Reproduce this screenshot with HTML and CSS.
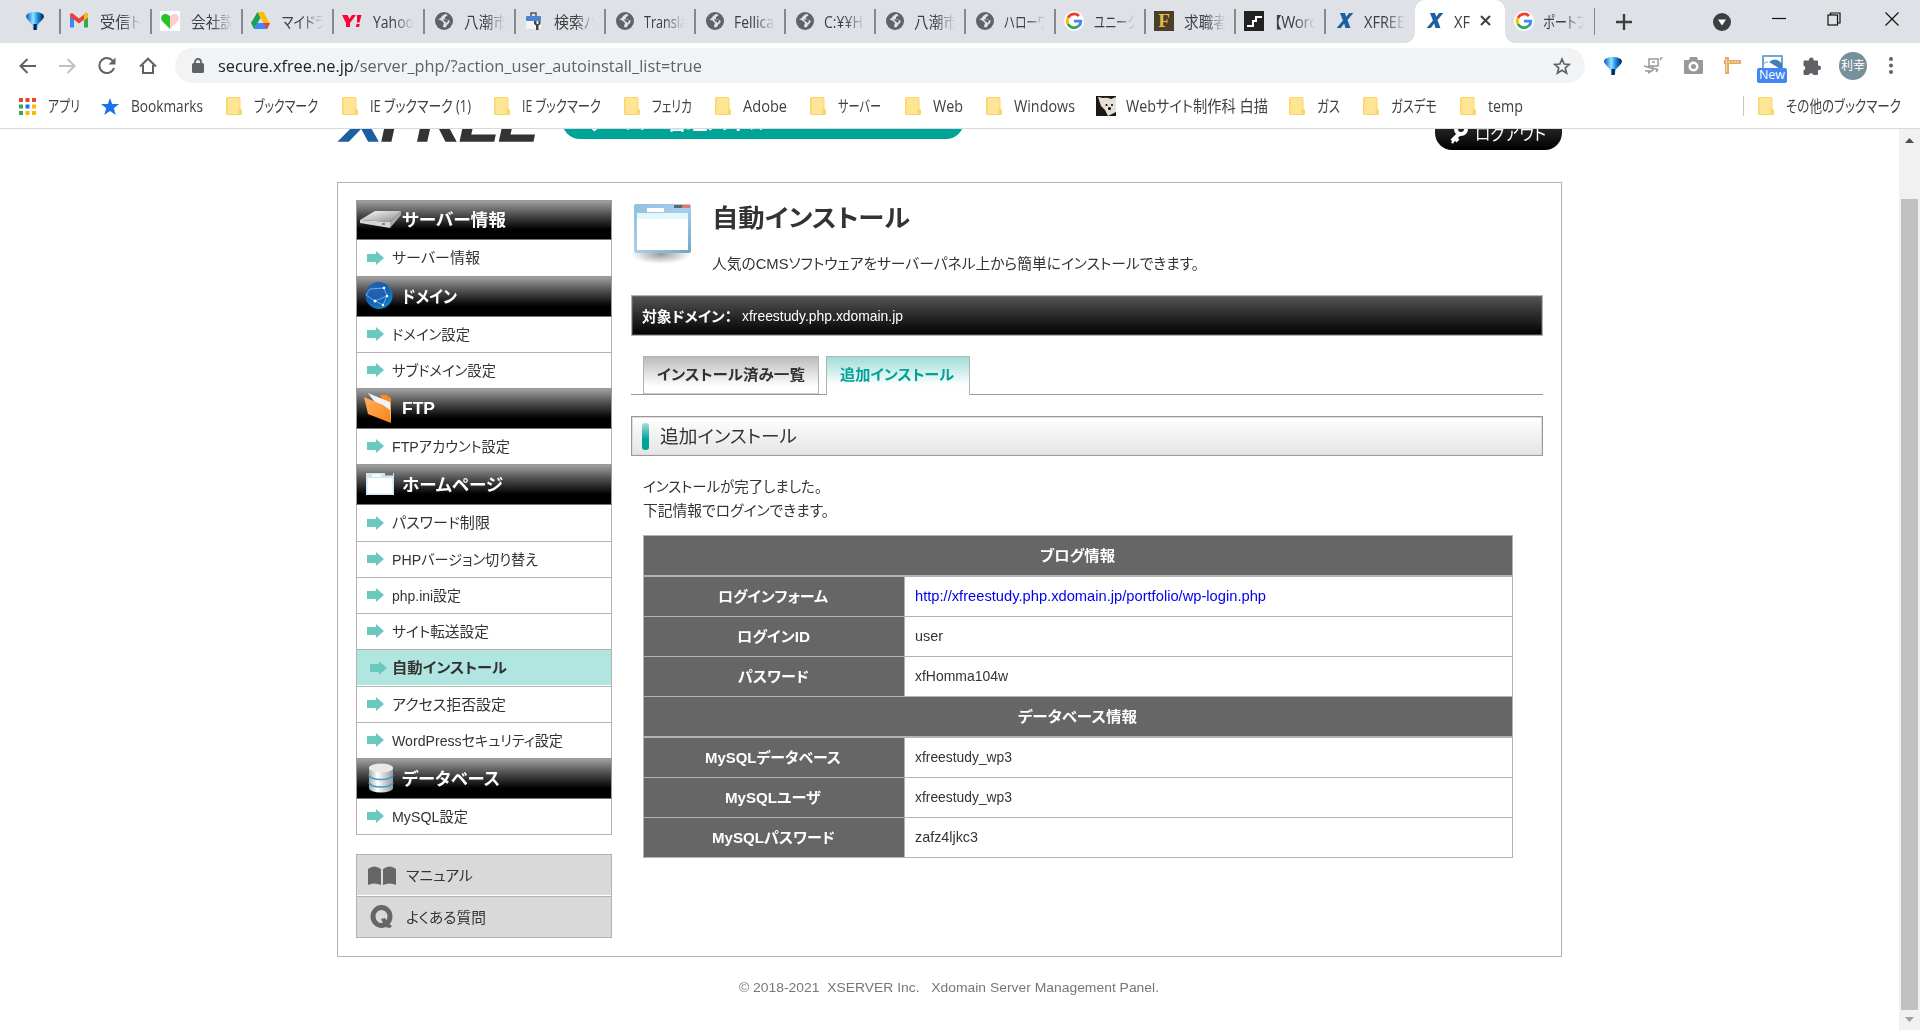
FILE: index.html
```html
<!DOCTYPE html>
<html lang="ja">
<head>
<meta charset="utf-8">
<title>XFREE サーバーパネル</title>
<link rel="stylesheet" href="styles.css">
</head>
<body>
<svg class="defs" width="0" height="0">
  <defs>
    <linearGradient id="gBlue" x1="0" y1="0" x2="1" y2="0"><stop offset="0" stop-color="#0a4fc4"/><stop offset=".4" stop-color="#8fe6ff"/><stop offset=".65" stop-color="#1a8be8"/><stop offset="1" stop-color="#061a4a"/></linearGradient>
    <linearGradient id="gDisk" x1="0" y1="0" x2="1" y2="1"><stop offset="0" stop-color="#fff"/><stop offset="1" stop-color="#8a8a8a"/></linearGradient>
    <radialGradient id="gGlobe" cx=".4" cy=".35" r=".7"><stop offset="0" stop-color="#2a5fb0"/><stop offset=".6" stop-color="#1560b0"/><stop offset="1" stop-color="#0e8ad0"/></radialGradient>
    <linearGradient id="gFold" x1="0" y1="0" x2="1" y2="1"><stop offset="0" stop-color="#ffb061"/><stop offset="1" stop-color="#f98416"/></linearGradient>
    <linearGradient id="gCyl" x1="0" y1="0" x2="1" y2="0"><stop offset="0" stop-color="#aaa"/><stop offset=".35" stop-color="#fff"/><stop offset="1" stop-color="#999"/></linearGradient>
    <linearGradient id="gWin" x1="0" y1="0" x2="1" y2="1"><stop offset="0" stop-color="#8fc0dc"/><stop offset=".5" stop-color="#a9cdf0"/><stop offset="1" stop-color="#6fa6c6"/></linearGradient>
    <radialGradient id="gShade"><stop offset="0" stop-color="#999"/><stop offset="1" stop-color="#999" stop-opacity="0"/></radialGradient>
    <symbol id="balloon" viewBox="0 0 18 18"><path d="M0 4C1 1 5 0 9 0s8 1 9 4c0 3-4 5.500-6.500 9L11 18H7l-.5-5C4 9.500 0 7 0 4z" fill="url(#gBlue)"/><path d="M7.500 12h3.300l-.3 6h-3z" fill="#06224f"/></symbol>
    <symbol id="globe" viewBox="0 0 18 18"><circle cx="9" cy="9" r="9" fill="#5f6368"/><path d="M3 7c2 0 3-1 4-3l3-2c2 0 3 1 2 2l-2 1v2l3 1c2 0 2 2 1 3l-2 2-1 2c-2 1-3 0-3-1l1-3-2-2z" fill="#dee1e6"/><path d="M8 7l5 1-1 3-3-2z" fill="#5f6368"/></symbol>
    <symbol id="google" viewBox="0 0 20 20"><circle cx="10" cy="10" r="10" fill="#fff"/><g fill="none" stroke-width="2.800"><path d="M15 5A6.800 6.800 0 0 0 4 6.800" stroke="#ea4335"/><path d="M4 6.800a6.800 6.800 0 0 0 0 6.400" stroke="#fbbc05"/><path d="M4 13.200a6.800 6.800 0 0 0 10.700 1.600" stroke="#34a853"/><path d="M10 10.200h6.800c0 2-.8 3.600-2.100 4.600" stroke="#4285f4"/></g></symbol>
    <symbol id="xlogo" viewBox="0 0 20 18"><path d="M4 0h6l1.500 4.500L15 0h5l-7 8.500L16.500 18h-6L9 12.500 5 18H0l7.500-9z" fill="#1d5fa3"/></symbol>
    <symbol id="folder" viewBox="0 0 16 18"><path d="M1.500 0H13a1.500 1.500 0 0 1 1.500 1.500V12l1.500 1v4a1 1 0 0 1-1 1H1.500A1.500 1.500 0 0 1 0 16.500v-15A1.500 1.500 0 0 1 1.500 0z" fill="#f8d66a"/><path d="M1.500 1H13.500V11.500L12.500 13v4h-11z" fill="#ffe593"/></symbol>
    <symbol id="arrow" viewBox="0 0 17 14"><path d="M0 3h9V0l8 7-8 7v-3H0z" fill="#6bc8be"/></symbol>
    <symbol id="win" viewBox="0 0 28 22"><rect width="28" height="22" fill="#cfe6f5"/><rect x="1.500" y="5" width="25" height="15.500" fill="#fff"/><rect x="19" width="8" height="2.500" fill="#7b6670"/><rect x="6" y="1.500" width="9" height="2" fill="#fff"/></symbol>
  </defs>
</svg>

<div class="browser">
  <div class="tabstrip">
    <div class="pinned"><svg width="18" height="18"><use href="#balloon"/></svg></div>
    <div class="tab wide"><svg width="20" height="17" viewBox="0 0 20 16"><path d="M1 15V2l4 2v11z" fill="#4285f4"/><path d="M15 4l4-2v13h-4z" fill="#34a853"/><path d="M1 2c1-2 3-1 4 0l5 4 5-4c1-1 3-2 4 0v2l-9 7-9-7z" fill="#ea4335"/><path d="M15 2c1-1 3-2 4 0v3l-4 3z" fill="#fbbc04"/></svg><span class="label"><span class="fit" data-w="42">受信ト</span></span></div>
    <div class="tab wide"><svg width="20" height="20"><rect width="20" height="20" fill="#fff"/><path d="M10 18L2 10C-1 5 4 0 10 5z" fill="#27c427"/><path d="M10 18l8-8c3-5-2-10-8-5z" fill="#fcc"/></svg><span class="label"><span class="fit" data-w="44">会社説</span></span></div>
    <div class="tab wide"><svg width="19" height="17"><path d="M6.500 0h6l6 11h-6z" fill="#fbbc04"/><path d="M6.500 0L0 11l3 6 6.500-11z" fill="#1e9e58"/><path d="M3 17h13l3-6H6z" fill="#4285f4"/><path d="M12.500 11H19l-3 6z" fill="#ea4335"/></svg><span class="label"><span class="fit" data-w="44">マイドラ</span></span></div>
    <div class="tab wide"><svg width="20" height="14"><path d="M0 1h5.500l2 4 2.500-4h4L8 9v4H4V9zM15 1h4.500l-2 7.500H15zM14.500 10h3.200l-.6 3h-3.200z" fill="#ff0033"/></svg><span class="label"><span class="fit" data-w="41">Yahoo</span></span></div>
    <div class="tab wide"><svg class="in" width="18" height="18"><use href="#globe"/></svg><span class="label"><span class="fit" data-w="44">八潮市</span></span></div>
    <div class="tab"><svg class="in" width="16" height="18"><path d="M5 4V1h5v3" fill="none" stroke="#555" stroke-width="1.500"/><rect y="4" width="15" height="5" rx="1" fill="#4d82d6"/><rect y="9" width="15" height="8" fill="#f4f4f4"/><path d="M8 9v3l2 1.500V18h2.500v-4.500L14.500 12V9h-2v3h-2V9z" fill="#444"/></svg><span class="label"><span class="fit" data-w="44">検索パ</span></span></div>
    <div class="tab"><svg class="in" width="18" height="18"><use href="#globe"/></svg><span class="label"><span class="fit" data-w="43">Transla</span></span></div>
    <div class="tab"><svg class="in" width="18" height="18"><use href="#globe"/></svg><span class="label"><span class="fit" data-w="40">Fellica</span></span></div>
    <div class="tab"><svg class="in" width="18" height="18"><use href="#globe"/></svg><span class="label"><span class="fit" data-w="39">C:¥¥H</span></span></div>
    <div class="tab"><svg class="in" width="18" height="18"><use href="#globe"/></svg><span class="label"><span class="fit" data-w="44">八潮市</span></span></div>
    <div class="tab"><svg class="in" width="18" height="18"><use href="#globe"/></svg><span class="label"><span class="fit" data-w="44">ハローワ</span></span></div>
    <div class="tab"><svg width="20" height="20"><use href="#google"/></svg><span class="label"><span class="fit" data-w="44">ユニーク</span></span></div>
    <div class="tab"><span class="f-icon">F</span><span class="label"><span class="fit" data-w="44">求職者</span></span></div>
    <div class="tab"><svg width="20" height="20"><rect width="20" height="20" fill="#222"/><path d="M3 15h6v-5h3V6h6" fill="none" stroke="#fff" stroke-width="2"/></svg><span class="label"><span class="fit tight" data-w="44">【Word</span></span></div>
    <div class="tab"><svg class="in" width="18" height="15"><use href="#xlogo"/></svg><span class="label"><span class="fit" data-w="41">XFREE</span></span></div>
    <div class="tab active"><svg class="in" width="18" height="15"><use href="#xlogo"/></svg><span class="label short"><span class="fit" data-w="16">XF</span></span><svg class="close" width="11" height="11"><path d="M1 1l9 9M10 1l-9 9" stroke="#3c4043" stroke-width="2"/></svg></div>
    <div class="tab last"><svg width="20" height="20"><use href="#google"/></svg><span class="label"><span class="fit" data-w="44">ポートフ</span></span></div>
    <svg class="plus" width="16" height="16"><path d="M8 0v16M0 8h16" stroke="#3c4043" stroke-width="2.400"/></svg>
    <div class="winctl">
      <svg width="18" height="18"><circle cx="9" cy="9" r="9" fill="#3c4043"/><path d="M5 6.500h8l-4 6z" fill="#fff"/></svg>
      <svg width="14" height="14"><path d="M0 6.500h14" stroke="#111" stroke-width="1.200"/></svg>
      <svg width="14" height="14" fill="none" stroke="#111" stroke-width="1.200"><rect x="1" y="3" width="9.500" height="10"/><path d="M3.500 3V1H13v10h-2.500"/></svg>
      <svg width="14" height="14"><path d="M.5.500l13 13M13.500.5l-13 13" stroke="#111" stroke-width="1.200"/></svg>
    </div>
  </div>

  <div class="toolbar">
    <div class="nav">
      <svg width="17" height="16" fill="none" stroke="#5f6368" stroke-width="2"><path d="M17 8H1.500M8.500 1l-7 7 7 7"/></svg>
      <svg width="17" height="16" fill="none" stroke="#bdc1c6" stroke-width="2"><path d="M0 8h15.500M8.500 1l7 7-7 7"/></svg>
      <svg width="18" height="18" fill="none" stroke="#5f6368" stroke-width="2"><path d="M15.500 5A7.500 7.500 0 1 0 16 11"/><path d="M10.500 7.500h7V.5z" fill="#5f6368" stroke="none"/></svg>
      <svg width="18" height="18" fill="none" stroke="#5f6368" stroke-width="2"><path d="M4 8v8h10V8M1 9.500L9 1.700l8 7.800" /></svg>
    </div>
    <div class="omnibox">
      <svg width="12" height="15"><rect y="5" width="12" height="10" rx="1.500" fill="#5f6368"/><path d="M3 6V4a3 3 0 0 1 6 0v2" fill="none" stroke="#5f6368" stroke-width="1.800"/></svg>
      <span class="url"><span class="fit" data-w="484"><b>secure.xfree.ne.jp</b>/server_php/?action_user_autoinstall_list=true</span></span>
      <svg class="fav" width="18" height="18" fill="none" stroke="#5f6368" stroke-width="1.700"><path d="M9 2l2.100 5 5.200.4-4 3.500 1.300 5.200L9 13.300l-4.600 2.800 1.300-5.200-4-3.500 5.200-.4z"/></svg>
    </div>
    <div class="ext">
      <svg width="18" height="18"><use href="#balloon"/></svg>
      <svg width="20" height="18" fill="none" stroke="#999" stroke-width="1.500"><path d="M6 2h9v7H6zM9 5h3M1 9l7 2 6 1M10 9v4l-5 3M2 14h5M17 3l2-3M15 12l-2 3"/></svg>
      <svg width="19" height="17"><path d="M1 3h4l1-3h7l1 3h4q1 0 1 1v12q0 1-1 1H1q-1 0-1-1V4q0-1 1-1z" fill="#999"/><circle cx="9.500" cy="9.500" r="5" fill="#fff"/><circle cx="9.500" cy="9.500" r="2.500" fill="#999"/></svg>
      <svg width="17" height="17"><path d="M1 0h4v3h12v4H5v10H1V7H0V3h1z" fill="#e5a869"/><path d="M2.500 2v13M5 4v2M8 4v2M11 4v2M14 4v2" stroke="#fbd9ae" stroke-width="1.200"/></svg>
      <div class="snap"><svg width="21" height="16"><rect width="21" height="16" rx="1" fill="#6fa6d2"/><path d="M2 2h17v11H2z" fill="#fff"/><path d="M7 7q7-6 13 2v6z" fill="#3f80b5"/><path d="M1 10q2-4 5-3" fill="none" stroke="#6fa6d2"/></svg><span class="badge">New</span></div>
      <svg width="18" height="18"><path d="M1.500 3.500H6a2.400 2.400 0 1 1 4.600 0H14a1 1 0 0 1 1 1v4a2.400 2.400 0 1 1 0 4.600V17a1 1 0 0 1-1 1h-3.500a2.500 2.500 0 0 0-4.800 0H1.500a1 1 0 0 1-1-1v-3.500a2.500 2.500 0 0 0 0-4.800V4.500a1 1 0 0 1 1-1z" fill="#5f6368"/></svg>
      <span class="avatar">利幸</span>
      <svg width="4" height="17" fill="#5f6368"><circle cx="2" cy="2" r="2"/><circle cx="2" cy="8.500" r="2"/><circle cx="2" cy="15" r="2"/></svg>
    </div>
  </div>

  <div class="bookmarks">
    <div class="bm"><svg width="17" height="17"><g fill="#ea4335"><path d="M0 0h4v4H0zM6.500 0h4v4h-4zM13 0h4v4h-4z"/></g><path d="M0 6.500h4v4H0zM0 13h4v4H0z" fill="#34a853"/><path d="M6.500 6.500h4v4h-4z" fill="#1a73e8"/><path d="M13 6.500h4v4h-4zM6.500 13h4v4h-4zM13 13h4v4h-4z" fill="#fbbc04"/></svg><span class="fit" data-w="32">アプリ</span></div>
    <div class="bm"><svg width="18" height="17"><path d="M9 0l2.200 6H18l-5.200 4.200L14.800 17 9 13l-5.800 4 2-6.800L0 6h6.800z" fill="#1a73e8"/></svg><span class="fit" data-w="72">Bookmarks</span></div>
    <div class="bm"><svg width="16" height="18"><use href="#folder"/></svg><span class="fit" data-w="64">ブックマーク</span></div>
    <div class="bm"><svg width="16" height="18"><use href="#folder"/></svg><span class="fit" data-w="101">IE ブックマーク (1)</span></div>
    <div class="bm"><svg width="16" height="18"><use href="#folder"/></svg><span class="fit" data-w="79">IE ブックマーク</span></div>
    <div class="bm"><svg width="16" height="18"><use href="#folder"/></svg><span class="fit" data-w="40">フェリカ</span></div>
    <div class="bm"><svg width="16" height="18"><use href="#folder"/></svg><span class="fit" data-w="44">Adobe</span></div>
    <div class="bm"><svg width="16" height="18"><use href="#folder"/></svg><span class="fit" data-w="43">サーバー</span></div>
    <div class="bm"><svg width="16" height="18"><use href="#folder"/></svg><span class="fit" data-w="30">Web</span></div>
    <div class="bm"><svg width="16" height="18"><use href="#folder"/></svg><span class="fit" data-w="61">Windows</span></div>
    <div class="bm dog"><svg width="20" height="20"><rect width="20" height="20" fill="#1d1815"/><path d="M2 1l5 1q4-1 8 1l5-2v15l-8 4-3-6-4-4z" fill="#e6e0d4"/><circle cx="10.500" cy="9" r="1"/><circle cx="16" cy="9" r="1"/><circle cx="13.500" cy="12.500" r="1.500"/></svg><span class="fit" data-w="142">Webサイト制作科 白描</span></div>
    <div class="bm"><svg width="16" height="18"><use href="#folder"/></svg><span class="fit" data-w="23">ガス</span></div>
    <div class="bm"><svg width="16" height="18"><use href="#folder"/></svg><span class="fit" data-w="46">ガスデモ</span></div>
    <div class="bm"><svg width="16" height="18"><use href="#folder"/></svg><span class="fit" data-w="35">temp</span></div>
    <div class="bm other"><svg width="16" height="18"><use href="#folder"/></svg><span class="fit" data-w="115">その他のブックマーク</span></div>
  </div>
</div>

<div class="viewport">
  <div class="page">
    <header class="header">
      <div class="brand"><span class="fit" data-w="196"><i>X</i>FREE</span></div>
      <div class="pill"><span class="fit" data-w="184">サーバー管理パネル</span></div>
      <div class="logout"><svg width="20" height="24"><path d="M11 14L4 21M7 18l3 3M4 21l2 1" stroke="#fff" stroke-width="4"/><circle cx="13" cy="9" r="5" fill="none" stroke="#fff" stroke-width="4"/></svg><span class="fit" data-w="71">ログアウト</span></div>
    </header>

    <div class="panel">
      <aside class="sidebar">
        <nav class="menu">
          <h3 class="h40"><svg width="42" height="20"><path d="M0 10L15 1h26L30 12z" fill="url(#gDisk)"/><path d="M0 10l30 2v6L0 13z" fill="#d5d5d5"/><path d="M30 12L41 1v4L30 18z" fill="#aaa"/><path d="M22 14h3" stroke="#333"/></svg><span class="fit" data-w="104">サーバー情報</span></h3>
          <a class="r36 nb"><svg width="17" height="14"><use href="#arrow"/></svg><span class="fit" data-w="88">サーバー情報</span></a>
          <h3><svg width="42" height="28"><circle cx="19" cy="13.500" r="13.500" fill="url(#gGlobe)"/><path d="M10 7l14-1 3 8-12 5-9-6zM15 19l8 4 4-9" fill="none" stroke="#7fc4f5" stroke-width=".8"/><g fill="#fff"><circle cx="24" cy="6" r="1.300"/><circle cx="27" cy="14" r="1.300"/><circle cx="15" cy="19" r="1.500"/><circle cx="23" cy="23" r="1.200"/></g></svg><span class="fit" data-w="55">ドメイン</span></h3>
          <a class="r35 nb"><svg width="17" height="14"><use href="#arrow"/></svg><span class="fit" data-w="78">ドメイン設定</span></a>
          <a class="r36"><svg width="17" height="14"><use href="#arrow"/></svg><span class="fit" data-w="104">サブドメイン設定</span></a>
          <h3><svg width="42" height="32"><path d="M20 3h7l2 2 2 1v24z" fill="#f98a1c"/><path d="M8 1l22 9 1 20-4-3z" fill="#eef3f5"/><path d="M4 5l19 8 7 5 1 13L8 22z" fill="url(#gFold)"/></svg><span class="fit low" data-w="33">FTP</span></h3>
          <a class="r35 nb"><svg width="17" height="14"><use href="#arrow"/></svg><span class="fit" data-w="118">FTPアカウント設定</span></a>
          <h3><svg width="42" height="22"><use href="#win" x="6" width="28" height="22"/></svg><span class="fit" data-w="101">ホームページ</span></h3>
          <a class="r36 nb"><svg width="17" height="14"><use href="#arrow"/></svg><span class="fit" data-w="98">パスワード制限</span></a>
          <a class="r36"><svg width="17" height="14"><use href="#arrow"/></svg><span class="fit" data-w="146">PHPバージョン切り替え</span></a>
          <a class="r36"><svg width="17" height="14"><use href="#arrow"/></svg><span class="fit" data-w="69">php.ini設定</span></a>
          <a class="r36"><svg width="17" height="14"><use href="#arrow"/></svg><span class="fit" data-w="97">サイト転送設定</span></a>
          <a class="r37 current"><svg width="17" height="14"><use href="#arrow"/></svg><span class="fit" data-w="115">自動インストール</span></a>
          <a class="r36"><svg width="17" height="14"><use href="#arrow"/></svg><span class="fit" data-w="114">アクセス拒否設定</span></a>
          <a class="r36"><svg width="17" height="14"><use href="#arrow"/></svg><span class="fit" data-w="171">WordPressセキュリティ設定</span></a>
          <h3><svg width="42" height="30"><path d="M9 5v20a12 4.500 0 0 0 24 0V5z" fill="url(#gCyl)"/><ellipse cx="21" cy="5" rx="12" ry="4.500" fill="#e8e8e8"/><path d="M9 12a12 4.500 0 0 0 24 0M9 19.500a12 4.500 0 0 0 24 0" fill="none" stroke="#3a9cc8" stroke-width="1.500"/></svg><span class="fit" data-w="98">データベース</span></h3>
          <a class="r35 nb"><svg width="17" height="14"><use href="#arrow"/></svg><span class="fit" data-w="76">MySQL設定</span></a>
        </nav>
        <div class="help">
          <a><svg width="28" height="20"><path d="M0 3q6-5 13 0v16q-7-3-13 0zM15 3q7-5 13 0v16q-6-3-13 0z" fill="#666"/></svg><span class="fit" data-w="67">マニュアル</span></a>
          <a><svg width="28" height="25"><ellipse cx="13.500" cy="11.500" rx="8.500" ry="9" fill="none" stroke="#666" stroke-width="5"/><path d="M13 14l4-1 3 5 4 3-2 2-5-1z" fill="#666"/></svg><span class="fit" data-w="80">よくある質問</span></a>
        </div>
      </aside>

      <main class="main">
        <div class="title">
          <svg width="62" height="62"><ellipse cx="31" cy="50" rx="30" ry="10" fill="url(#gShade)"/><rect x="4" y="0" width="57" height="49" rx="2" fill="url(#gWin)"/><rect x="7" y="9" width="51" height="37" fill="#fff"/><rect x="7" y="9" width="51" height="6" fill="#e4f7f8"/><rect x="17" y="4" width="17" height="4" fill="#fff"/><path d="M44 1h16v3H44z" fill="#596878"/><path d="M52 1h8v3h-8z" fill="#e27a5c"/></svg>
          <div class="title-text">
            <h1><span class="fit" data-w="198">自動インストール</span></h1>
            <p><span class="fit" data-w="487">人気のCMSソフトウェアをサーバーパネル上から簡単にインストールできます。</span></p>
          </div>
        </div>
        <div class="domain"><b class="fit" data-w="90">対象ドメイン：</b><span class="fit" data-w="161">xfreestudy.php.xdomain.jp</span></div>
        <div class="ptabs">
          <a class="ptab"><span class="fit" data-w="148">インストール済み一覧</span></a>
          <a class="ptab on"><span class="fit" data-w="114">追加インストール</span></a>
        </div>
        <h2><span class="fit" data-w="137">追加インストール</span></h2>
        <div class="message">
          <p><span class="fit" data-w="179">インストールが完了しました。</span></p>
          <p><span class="fit" data-w="186">下記情報でログインできます。</span></p>
        </div>
        <div class="table">
          <div class="th full"><span class="fit" data-w="75">ブログ情報</span></div>
          <div class="th thick"><span class="fit" data-w="110">ログインフォーム</span></div><div class="td thick"><a class="fit" data-w="351">http://xfreestudy.php.xdomain.jp/portfolio/wp-login.php</a></div>
          <div class="th"><span class="fit" data-w="73">ログインID</span></div><div class="td"><span class="fit" data-w="28">user</span></div>
          <div class="th"><span class="fit" data-w="71">パスワード</span></div><div class="td"><span class="fit" data-w="93">xfHomma104w</span></div>
          <div class="th full"><span class="fit" data-w="119">データベース情報</span></div>
          <div class="th thick"><span class="fit" data-w="136">MySQLデータベース</span></div><div class="td thick"><span class="fit" data-w="97">xfreestudy_wp3</span></div>
          <div class="th"><span class="fit" data-w="96">MySQLユーザ</span></div><div class="td"><span class="fit" data-w="97">xfreestudy_wp3</span></div>
          <div class="th"><span class="fit" data-w="123">MySQLパスワード</span></div><div class="td"><span class="fit" data-w="63">zafz4ljkc3</span></div>
        </div>
      </main>
    </div>
    <footer><span class="fit" data-w="420">© 2018-2021&nbsp; XSERVER Inc.&nbsp;&nbsp; Xdomain Server Management Panel.</span></footer>
  </div>
  <div class="scrollbar"><svg width="9" height="5"><path d="M0 5l4.500-5L9 5z" fill="#505050"/></svg><div class="thumb"></div><svg width="9" height="5"><path d="M0 0l4.500 5L9 0z" fill="#a0a0a0"/></svg></div>
</div>
<script src="fit.js"></script>
</body>
</html>
```
FILE: styles.css
```css
* { box-sizing: border-box; }
body {
  margin: 0;
  width: 1920px;
  height: 1030px;
  overflow: hidden;
  display: flex;
  flex-direction: column;
  background: #fff;
  color: #333;
  font: 14.5px "Liberation Sans", "Noto Sans CJK JP", sans-serif;
}
svg { display: block; flex: none; }
.defs { position: absolute; }
.fit {
  display: inline-block;
  white-space: nowrap;
  transform-origin: 0 50%;
  font-feature-settings: "palt";
}
h1, h2, h3, p { margin: 0; font-weight: normal; }

/* browser frame */
.browser {
  flex: none;
  height: 129px;
  border-bottom: 1px solid #d8dadd;
  color: #3c4043;
  font: 15.5px "Open Sans", "Noto Sans CJK JP", sans-serif;
  line-height: 20px;
}
.tabstrip { display: flex; height: 43px; background: #dee1e6; }
.pinned { width: 60px; padding: 12px 0 0 26px; }
.tab {
  position: relative;
  display: flex;
  align-items: center;
  width: 90px;
  padding: 0 0 2px 9px;
}
.tab::before {
  content: "";
  position: absolute;
  left: -1px;
  top: 9px;
  width: 1.500px;
  height: 25px;
  background: #85888c;
}
.tab.wide { width: 91px; }
.tab > svg:first-child, .f-icon { margin-right: auto; }
.tab > svg.in { margin-left: 2px; }
.label {
  width: 42px;
  margin-right: 9px;
  padding-top: 3px;
  overflow: hidden;
  -webkit-mask-image: linear-gradient(90deg, #000 50%, transparent 98%);
  mask-image: linear-gradient(90deg, #000 50%, transparent 98%);
}
.label.short { width: 16px; margin-right: 8px; -webkit-mask-image: none; mask-image: none; }
.tab.active { background: #fff; border-radius: 10px 10px 0 0; }
.tab.active::before {
  left: -10px;
  top: 33px;
  width: 110px;
  height: 10px;
  background:
    radial-gradient(circle at 0 0, transparent 9.500px, #fff 10px) 0 0 / 10px 10px no-repeat,
    radial-gradient(circle at 10px 0, transparent 9.500px, #fff 10px) 100% 0 / 10px 10px no-repeat;
}
.tab.last::before { display: none; }
.tab.active .close { margin: 0 14px 0 2px; }
.tab.last { border-right: 1px solid #85888c; border-image: linear-gradient(transparent 9px, #85888c 9px, #85888c 34px, transparent 34px) 1; }
.f-icon {
  width: 20px;
  height: 20px;
  background: #4a3f28;
  color: #e8b84a;
  font: bold 19px/20px "Liberation Serif", serif;
  text-align: center;
}
.tight { letter-spacing: -.5px; }
.plus { margin: 14px 0 0 21px; }
.winctl { display: flex; margin-left: 81px; padding-top: 12px; gap: 41px; }
.winctl svg:first-child { margin-top: 1px; }
.winctl svg:last-child { margin-left: 3px; }

.toolbar { display: flex; align-items: center; height: 45px; padding-left: 19px; }
.nav { display: flex; align-items: center; gap: 22.500px; width: 156px; }
.omnibox {
  display: flex;
  align-items: center;
  width: 1410px;
  height: 35px;
  padding: 0 14px 0 17px;
  border-radius: 18px;
  background: #f1f3f4;
}
.url { margin-left: 14px; color: #5f6368; font-size: 17px; }
.url b { color: #202124; font-weight: normal; }
.fav { margin-left: auto; }
.ext { display: flex; align-items: center; gap: 21px; margin-left: 19px; }
.snap { position: relative; width: 30px; height: 35px; padding: 7px 0 0 5px; margin: 0 -5px; }
.badge {
  position: absolute;
  left: 0;
  top: 20px;
  width: 30px;
  height: 15px;
  border-radius: 2px;
  background: #4285f4;
  color: #fff;
  font-size: 12.500px;
  line-height: 14px;
  text-align: center;
}
.avatar {
  width: 28px;
  height: 28px;
  margin: 0 1px 0 -3px;
  border-radius: 50%;
  background: #78909c;
  color: #fff;
  font-size: 12px;
  line-height: 27px;
  text-align: center;
}

.bookmarks { display: flex; align-items: center; gap: 23.200px; height: 36px; padding: 0 19px; }
.bm { display: flex; align-items: center; gap: 12px; height: 30px; }
.bm.dog { gap: 10px; margin: 0 -2px; }
.bm:first-child { margin-right: -2px; }
.bm.other { position: relative; margin-left: auto; }
.bm.other::before { content: ""; position: absolute; left: -15px; top: 5px; width: 1px; height: 20px; background: #c4c7cb; }

/* page */
.viewport { flex: 1; display: flex; min-height: 0; }
.page { width: 1899px; overflow: hidden; }
.header { display: flex; width: 1225px; height: 53px; margin: 0 0 0 337px; overflow: hidden; }
.brand {
  width: 225px;
  height: 53px;
  padding-left: 5px;
  color: #333;
  font: italic bold 52px/50px "Liberation Sans", sans-serif;
  -webkit-text-stroke: 1.500px currentColor;
  margin-top: -31px;
}
.brand i { color: #1d5fa3; }
.pill {
  width: 402px;
  height: 36px;
  margin-top: -26px;
  padding-left: 23px;
  border-radius: 18px;
  background: #00a398;
  color: #fff;
  font-size: 21px;
  font-weight: bold;
  line-height: 38px;
}
.logout {
  display: flex;
  align-items: center;
  gap: 7px;
  width: 127px;
  height: 40px;
  margin: -19px 0 0 auto;
  padding: 4px 0 0 13px;
  border-radius: 17px;
  background: linear-gradient(#555, #222 50%, #000);
  color: #fff;
  font-size: 17px;
}

.panel {
  display: flex;
  width: 1225px;
  height: 775px;
  margin-left: 337px;
  padding: 17px 18px 0;
  border: 1px solid #b3b3b3;
}
.sidebar { width: 256px; }
.menu { border: 1px solid #b3b3b3; border-top: 0; }
.menu h3 {
  display: flex;
  align-items: center;
  height: 41px;
  margin: 0 -1px;
  padding: 0 0 1px 4px;
  border: 1px solid #999;
  border-bottom-color: #777;
  background: linear-gradient(#a0a0a0, #505050 35%, #000 75%);
  color: #fff;
  font-size: 17px;
  font-weight: bold;
}
.menu h3 .fit { margin: 0 0 2px -1px; }
.menu h3 .low { margin-bottom: -2px; }
.menu h3 svg { margin-left: -1px; margin-right: 1px; }
.menu .h40 { height: 40px; }
.menu a { display: flex; align-items: center; gap: 8px; padding: 0 0 1px 10px; border-top: 1px solid #b3b3b3; }
.menu a .fit, .help .fit { margin-bottom: 2px; }
.menu .nb { border-top: 0; }
.r35 { height: 35px; }
.r36 { height: 36px; }
.r37 { height: 37px; }
.menu .current { gap: 5px; padding-left: 13px; background: #b1e5e0; box-shadow: inset 0 -1px #fff; font-weight: bold; }
.help { margin-top: 19px; border: 1px solid #b3b3b3; background: #d9d9d9; }
.help a { display: flex; align-items: center; gap: 10px; height: 41px; padding-left: 11px; }
.help a + a { border-top: 1px solid #b3b3b3; box-shadow: 0 -1px #fff; }

.main { width: 912px; margin-left: 19px; }
.title { display: flex; height: 95px; padding-top: 4px; }
.title-text { margin-left: 20px; }
h1 { height: 28px; padding-top: 1px; color: #333; font-size: 24.500px; font-weight: bold; line-height: 28px; }
.title p { margin-top: 21px; line-height: 22px; }
.title svg { margin-left: -1px; }
.domain {
  display: flex;
  align-items: center;
  gap: 10px;
  height: 41px;
  padding-left: 10px;
  border: 1px solid #b3b3b3;
  background: linear-gradient(#555, #000);
  box-shadow: inset 0 0 0 1px rgba(120, 120, 120, .5);
  color: #fff;
}
.ptabs { display: flex; align-items: flex-end; gap: 7px; height: 59px; padding-left: 12px; border-bottom: 1px solid #999; }
.ptab {
  height: 38px;
  padding: 7px 13px 0;
  border: 1px solid #b3b3b3;
  border-bottom: 0;
  background: linear-gradient(#bbb, #fff 80%);
  box-shadow: inset 0 -1px #ccc;
  line-height: 22px;
  width: 176px;
  color: #333;
  font-weight: bold;
}
.ptab.on { width: 144px; height: 39px; margin-bottom: -1px; background: linear-gradient(#a0ddd8, #fff 75%); box-shadow: none; color: #00a398; }
h2 {
  display: flex;
  align-items: center;
  position: relative;
  height: 40px;
  margin-top: 21px;
  padding: 0 0 2px 28px;
  border: 1px solid #999;
  background: linear-gradient(#fff, #e4e4e4);
  box-shadow: inset 0 0 0 1px #ddd;
  color: #333;
  font-size: 18px;
}
h2::before {
  content: "";
  position: absolute;
  left: 10px;
  top: 6px;
  width: 7px;
  height: 27px;
  border-radius: 3px;
  background: linear-gradient(#a6ddd9, #00a398 60%);
}
.message { height: 79px; padding: 19px 0 0 12px; }
.message p { height: 24px; line-height: 24px; }
.table {
  display: grid;
  grid-template-columns: 261px 1fr;
  grid-template-rows: 40px 41px 40px 40px 40px 41px 40px 40px;
  width: 870px;
  margin-left: 12px;
  border: 1px solid #b3b3b3;
  border-top: 0;
}
.th, .td { display: flex; align-items: center; padding-bottom: 2px; border-top: 1px solid #b3b3b3; }
.th { justify-content: center; padding-right: 2px; border-right: 1px solid #b3b3b3; background: #666; color: #fff; font-weight: bold; }
.full { grid-column: 1 / 3; border-right: 0; }
.td { padding-left: 10px; }
.thick { border-top-width: 2px; }
.td a { color: #00e; }
footer { margin-top: 20px; padding-left: 739px; color: #777; font-size: 13.500px; line-height: 22px; }

.scrollbar { display: flex; flex-direction: column; align-items: center; width: 21px; padding: 9px 0 8px; background: #f1f1f1; }
.thumb { width: 17px; height: 811px; margin: 56px 0 auto; background: #c1c1c1; }
```
FILE: fit.js
```js
document.querySelectorAll('.fit').forEach(function (el) {
  var natural = el.getBoundingClientRect().width;
  var wanted = Number(el.dataset.w);
  el.style.transform = 'scaleX(' + wanted / natural + ')';
  el.style.marginRight = (wanted - natural) + 'px';
});
```
